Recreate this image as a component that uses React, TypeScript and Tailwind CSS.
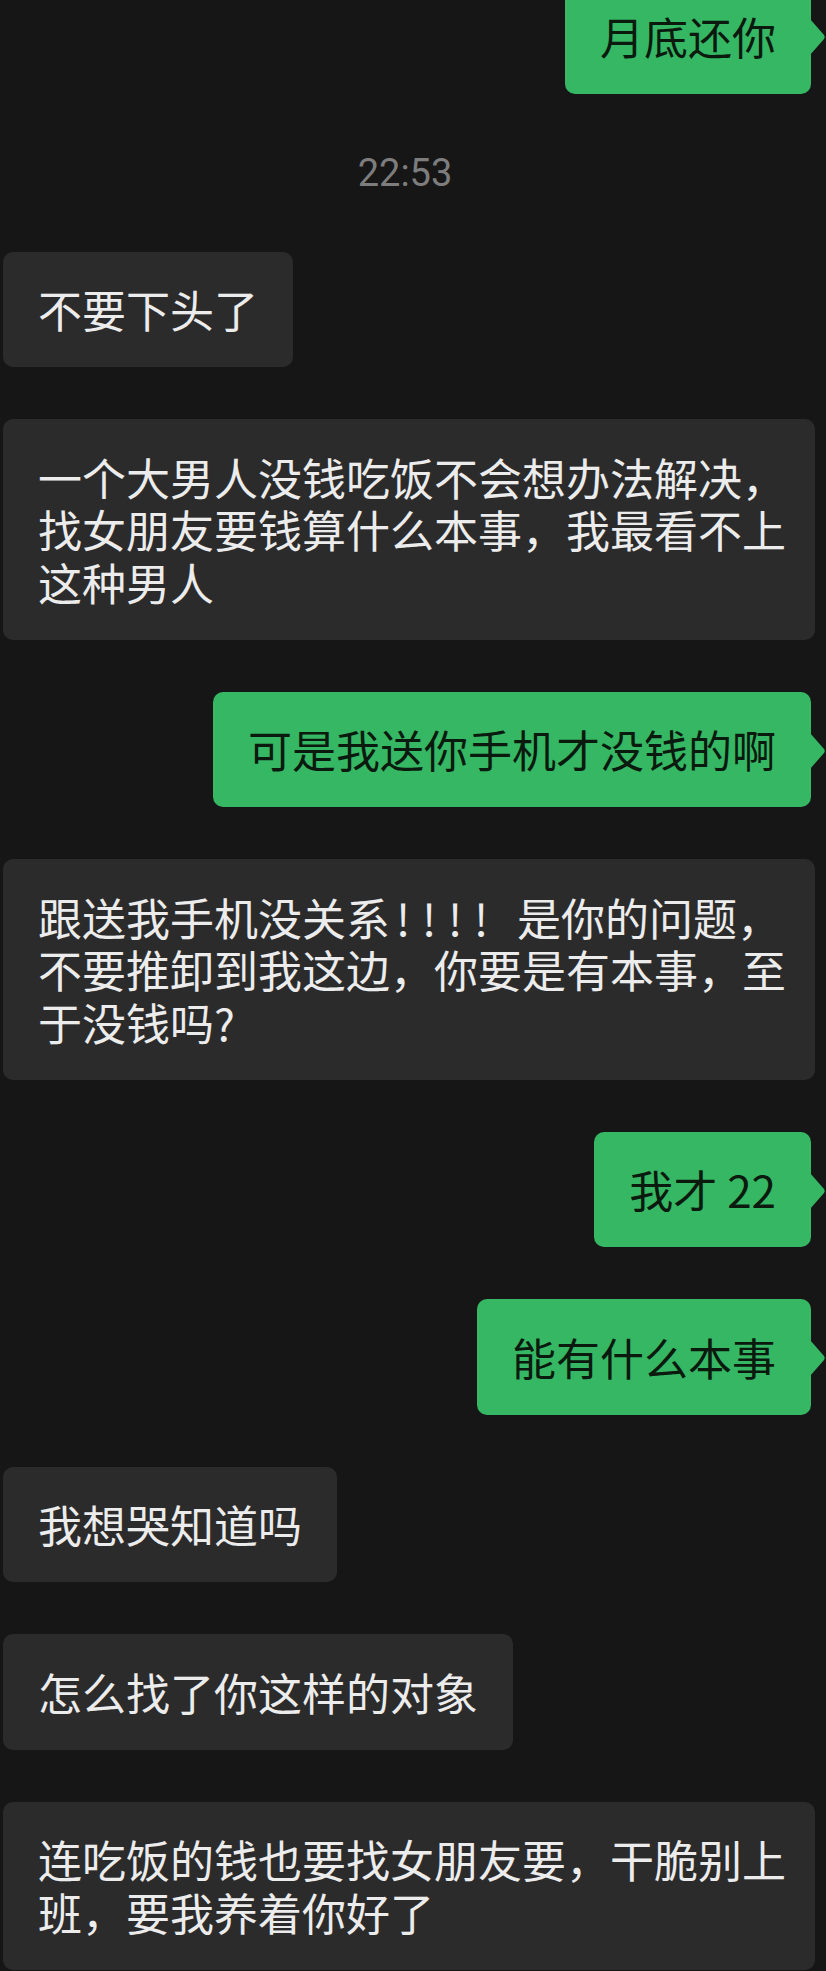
import React from 'react';

type Line = React.ReactNode;

const Bang = ({ last = false }: { last?: boolean }) => (
  <span className={`inline-block w-[26px] text-center ${last ? 'mr-[23px]' : ''}`}>!</span>
);

const LeftBubble = ({ lines, wide = false }: { lines: Line[]; wide?: boolean }) => (
  <div
    className={`self-start ml-[3px] rounded-[10px] bg-[#2b2b2b] text-[#ececec] pl-[35px] pr-[35px] py-[31.5px] ${
      wide ? 'w-[812px]' : ''
    }`}
  >
    {lines.map((l, i) => (
      <div key={i} className="whitespace-nowrap">
        {l}
      </div>
    ))}
  </div>
);

const RightBubble = ({ text, className = '' }: { text: string; className?: string }) => (
  <div className={`relative self-end mr-[15px] rounded-[10px] bg-[#36b764] text-[#0b1a0e] px-[35px] py-[31.5px] ${className}`}>
    <div className="whitespace-nowrap">{text}</div>
    {/* tail */}
    <svg className="absolute right-[-15px] top-[41px]" width="16" height="36" viewBox="0 0 16 36">
      <path d="M0 0 L14 16 Q15.5 18 14 20 L0 36 Z" fill="#36b764" />
    </svg>
  </div>
);

export default function App() {
  return (
    <div
      className="h-[1971px] overflow-hidden bg-[#161616] flex flex-col text-[44px] leading-[52.5px]"
      style={{ fontFamily: '"Noto Sans CJK SC", "Noto Sans", sans-serif' }}
    >
      <RightBubble text="月底还你" className="-mt-[22px]" />

      <div className="h-[158px] flex items-center justify-center pr-[16px]">
        <span className="text-[38px] leading-none text-[#7d7d7d]" style={{ fontFamily: 'Roboto, "Noto Sans", sans-serif' }}>
          22:53
        </span>
      </div>

      <div className="flex flex-col gap-[52px]">
        <LeftBubble lines={['不要下头了']} />

        <LeftBubble
          wide
          lines={['一个大男人没钱吃饭不会想办法解决，', '找女朋友要钱算什么本事，我最看不上', '这种男人']}
        />

        <RightBubble text="可是我送你手机才没钱的啊" />

        <LeftBubble
          wide
          lines={[
            <>
              跟送我手机没关系
              <Bang />
              <Bang />
              <Bang />
              <Bang last />
              是你的问题，
            </>,
            '不要推卸到我这边，你要是有本事，至',
            '于没钱吗?',
          ]}
        />

        <RightBubble text="我才 22" />

        <RightBubble text="能有什么本事" />

        <LeftBubble lines={['我想哭知道吗']} />

        <LeftBubble lines={['怎么找了你这样的对象']} />

        <LeftBubble wide lines={['连吃饭的钱也要找女朋友要，干脆别上', '班，要我养着你好了']} />
      </div>
    </div>
  );
}
